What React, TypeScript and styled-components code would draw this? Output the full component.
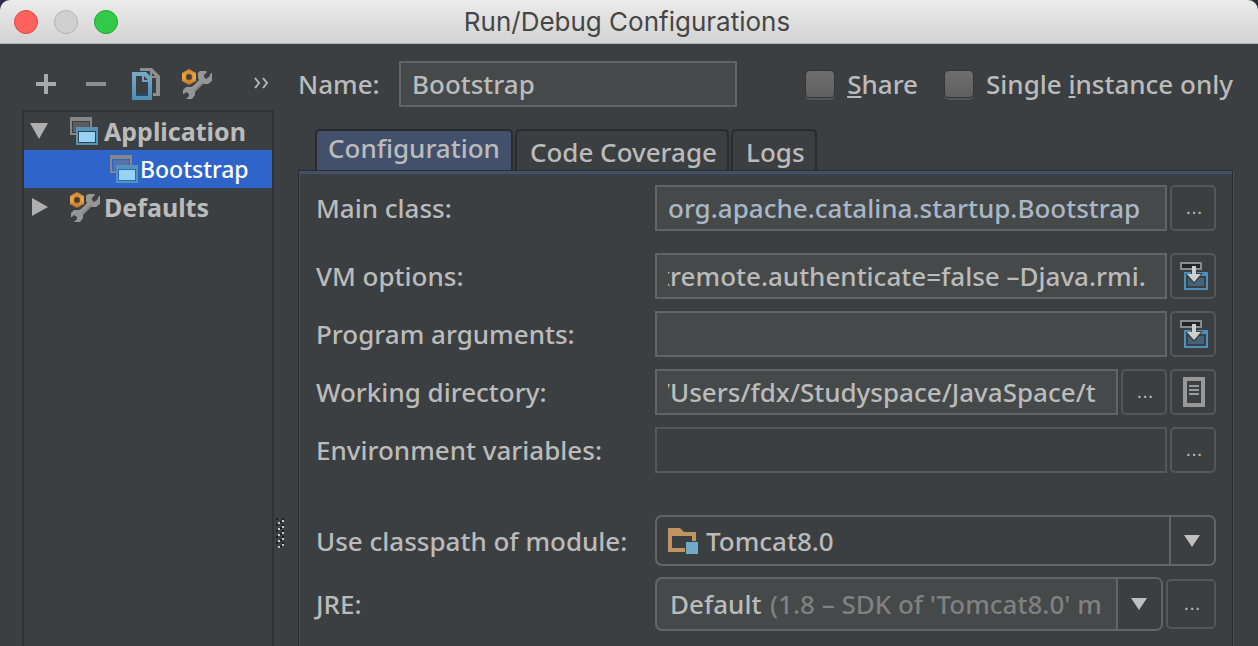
import React from 'react';
import styled, { createGlobalStyle, css } from 'styled-components';

const c = {
  bg: '#3c3f41',
  field: '#45494a',
  line: '#646464',
  softLine: '#555758',
  dark: '#292b2d',
  text: '#bbbbbb',
  accent: '#43506c',
};

const GlobalStyle = createGlobalStyle`
  *, *::before, *::after { box-sizing: border-box; }
  body {
    margin: 0;
    background: #2b2f45;
    color: ${c.text};
    font-family: "Noto Sans", "Open Sans", sans-serif;
    font-size: 26px;
    font-weight: 500;
    line-height: 36px;
  }
  button, input, select { font: inherit; color: inherit; margin: 0; }
`;

const Dialog = styled.div`
  display: flex;
  flex-direction: column;
  height: 100vh;
  overflow: hidden;
  background: ${c.bg};
  border-radius: 10px 10px 0 0;
`;

const TitleBar = styled.header`
  display: grid;
  grid-template-columns: 1fr auto 1fr;
  align-items: center;
  flex: none;
  height: 44px;
  padding: 0 18px 0 14px;
  background: linear-gradient(#ebebeb, #d3d3d3);
  border-bottom: 1px solid #b4b4b4;
`;

const Lights = styled.div`
  display: flex;
  gap: 16px;
`;

const Light = styled.button<{ $fill: string; $edge: string }>`
  width: 24px;
  height: 24px;
  padding: 0;
  border: 1px solid ${(p) => p.$edge};
  border-radius: 50%;
  background: ${(p) => p.$fill};
`;

const Title = styled.h1`
  margin: 0;
  font: 400 26px/36px Inter, Roboto, sans-serif;
  color: #464646;
`;

const Body = styled.div`
  display: flex;
  flex: 1;
  min-height: 0;
`;

const Sidebar = styled.aside`
  display: flex;
  flex-direction: column;
  flex: none;
  width: 274px;
  padding-left: 22px;
`;

const Toolbar = styled.div`
  display: flex;
  align-items: center;
  gap: 2px;
  height: 66px;
  padding-top: 14px;
`;

const ToolButton = styled.button<{ $end?: boolean }>`
  display: flex;
  align-items: center;
  justify-content: center;
  width: ${(p) => (p.$end ? 26 : 48)}px;
  height: 40px;
  padding: 0;
  margin-left: ${(p) => (p.$end ? 'auto' : 0)};
  border: 0;
  background: none;
`;

const Tree = styled.ul`
  flex: 1;
  margin: 0;
  padding: 0;
  list-style: none;
  border: 2px solid #323232;
  border-bottom: 0;
`;

const TreeRow = styled.li<{ $selected?: boolean; $child?: boolean }>`
  display: flex;
  align-items: center;
  gap: 6px;
  height: 38px;
  padding-left: 6px;
  font-weight: 700;
  font-size: 25px;
  ${(p) =>
    p.$child &&
    css`
      gap: 2px;
      padding-left: 86px;
      font-size: 23px;
      font-weight: 500;
    `}
  ${(p) =>
    p.$selected &&
    css`
      background: #2f65ca;
      color: #ffffff;
    `}
`;

const Twisty = styled.svg`
  flex: none;
  width: 20px;
  height: 20px;
  margin-right: 14px;
`;

const IconSlot = styled.span`
  display: flex;
  justify-content: center;
  flex: none;
  width: 28px;
  svg { flex: none; }
`;

const Splitter = styled.div`
  flex: none;
  width: 24px;
  padding: 474px 0 0 2px;
  line-height: 0;
`;

const Main = styled.main`
  display: flex;
  flex-direction: column;
  flex: 1;
  min-width: 0;
  padding-right: 25px;
`;

const NameRow = styled.div`
  display: flex;
  align-items: center;
  padding-top: 17px;
`;

const NameLabel = styled.label`
  width: 101px;
`;

const Field = styled.input<{ $shift?: number; $link?: boolean }>`
  flex: 1;
  min-width: 0;
  height: 46px;
  padding: 0 11px;
  border: 2px solid ${c.line};
  border-radius: 0;
  outline: 0;
  background: ${c.field};
  color: ${(p) => (p.$link ? '#a9b7c6' : c.text)};
  text-indent: ${(p) => -(p.$shift ?? 0)}px;
  &:disabled {
    background: none;
    border-color: ${c.softLine};
  }
`;

const NameField = styled(Field)`
  flex: 0 1 338px;
`;

const Checks = styled.div`
  display: flex;
  flex: none;
  gap: 26px;
  margin-left: auto;
`;

const CheckLabel = styled.label`
  display: flex;
  align-items: center;
  gap: 12px;
  white-space: pre;
`;

const CheckBox = styled.input`
  appearance: none;
  width: 30px;
  height: 28px;
  border: 1px solid #333537;
  border-radius: 5px;
  background: linear-gradient(#6e6e6e, #606060);
  box-shadow: 0 2px 0 #535657;
`;

const Key = styled.span`
  text-decoration: underline;
  text-decoration-thickness: 2px;
  text-underline-offset: 2px;
`;

const Tabs = styled.div`
  display: flex;
  gap: 2px;
  padding: 22px 0 0 17px;
`;

const Tab = styled.button<{ $active?: boolean }>`
  height: 41px;
  padding: ${(p) => (p.$active ? '0 11px 5px' : '3px 10px 0 13px')};
  border: 2px solid ${c.dark};
  border-bottom: 0;
  border-radius: 5px 5px 0 0;
  background: ${(p) => (p.$active ? c.accent : 'none')};
  line-height: 34px;
`;

const Panel = styled.form`
  flex: 1;
  border: solid ${c.dark};
  border-width: 1px 1px 0;
  box-shadow: 1px 1px 0 ${c.accent};
`;

const PanelInner = styled.div`
  display: flex;
  flex-direction: column;
  height: 100%;
  padding: 11px 16px 0 16px;
  border-top: 3px solid ${c.accent};
  border-left: 1px solid ${c.accent};
`;

const Row = styled.div<{ $gap?: number }>`
  display: grid;
  grid-template-columns: 339px minmax(0, 1fr);
  align-items: center;
  margin-top: ${(p) => p.$gap ?? 0}px;
`;

const Controls = styled.div`
  display: flex;
  align-items: center;
  gap: 3px;
`;

const SquareButton = styled.button<{ $size?: number }>`
  display: flex;
  align-items: center;
  justify-content: center;
  flex: none;
  width: ${(p) => p.$size ?? 46}px;
  height: ${(p) => p.$size ?? 46}px;
  padding: 0 0 0 2px;
  border: 2px solid ${c.softLine};
  border-radius: 5px;
  background: none;
  font: 18px/20px "DejaVu Sans", sans-serif;
`;

const Combo = styled.div<{ $filled?: boolean }>`
  display: flex;
  align-items: center;
  flex: 1;
  min-width: 0;
  height: ${(p) => (p.$filled ? 54 : 51)}px;
  padding-left: ${(p) => (p.$filled ? 13 : 11)}px;
  border: 2px solid ${c.line};
  border-radius: 7px;
  background: ${(p) => (p.$filled ? c.field : 'none')};
  overflow: hidden;
`;

const Select = styled.select<{ $grow?: boolean }>`
  appearance: none;
  flex: ${(p) => (p.$grow ? '1' : 'none')};
  padding: 0;
  border: 0;
  outline: 0;
  background: none;
`;

const Hint = styled.span`
  flex: 1;
  min-width: 0;
  margin: 0 0 0 8px;
  overflow: hidden;
  white-space: pre;
  color: #808080;
`;

const ComboArrow = styled.span`
  display: flex;
  align-items: center;
  align-self: stretch;
  flex: none;
  width: 45px;
  padding-left: 13px;
  border-left: 2px solid ${c.line};
  background: ${c.bg};
`;

const ModuleIconBox = styled.svg`
  flex: none;
  width: 30px;
  height: 26px;
  margin-right: 8px;
`;

const WindowsIcon = () => (
  <svg width="28" height="28" viewBox="0 0 28 28" aria-hidden="true">
    <path fill="#878787" d="M0 0H22V10H20V4H2V16H6V18H0Z" />
    <path fill="#878787" fillOpacity=".42" d="M3 5H19V10H6V15H3Z" />
    <path fill="#5394b8" fillRule="evenodd" d="M6 10H28V28H6ZM8 14V26H26V14Z" />
    <path fill="#98d3f5" d="M9 15H25V25H9Z" />
  </svg>
);

const WrenchIcon = () => (
  <svg width="31" height="31" viewBox="0 0 31 31" aria-hidden="true">
    <defs>
      <linearGradient id="nut" x1="0" y1="0" x2="0" y2="1">
        <stop offset="0" stopColor="#c9822e" />
        <stop offset=".5" stopColor="#edaa43" />
        <stop offset="1" stopColor="#b96d26" />
      </linearGradient>
    </defs>
    <path
      fill="#969696"
      d="M17 4L19 2H25L26 3L23 6V8L25 10L28 8L30 4H31V12L27 15H22L14 23V26L11 30L5 30L8 27L8 25L5 23L3 25H2V21L5 18H10L12 17L18 11L17 9Z"
    />
    <path stroke="#777777" fill="none" d="M13 22L23 13" />
    <path
      fill="url(#nut)"
      fillRule="evenodd"
      d="M8 0L15 4V12L8 16L1 12V4ZM8 5A3 3 0 1 0 8 11A3 3 0 1 0 8 5Z"
    />
    <circle cx="8" cy="8" r="3" fill="none" stroke="#87501f" />
  </svg>
);

const CopyIcon = () => (
  <svg width="28" height="32" viewBox="0 0 28 32" aria-hidden="true">
    <defs>
      <linearGradient id="sheet" x1="0" y1="0" x2="0" y2="1">
        <stop offset="0" stopColor="#79aac8" />
        <stop offset=".7" stopColor="#5c97bc" />
        <stop offset="1" stopColor="#4f8db3" />
      </linearGradient>
    </defs>
    <path
      fill="#8e8e8e"
      fillRule="evenodd"
      d="M8 0H20L28 8V28H21V25H24V10H18V3H8ZM20 5V8H23Z"
    />
    <path
      fill="url(#sheet)"
      fillRule="evenodd"
      d="M0 4H14L20 10V32H0ZM4 8V28H16V14H10V8ZM12 8V12H16Z"
    />
    <path fill="#1f4f70" d="M4 26H16V28H4Z" />
  </svg>
);

const ExpandIcon = () => (
  <svg width="28" height="28" viewBox="0 0 28 28" aria-hidden="true">
    <path fill="#232425" stroke="#8c8c8c" strokeWidth="2" d="M1 1H21V7H1Z" />
    <path fill="#4a92bd" fillRule="evenodd" d="M4 10H28V28H4ZM6 14V26H26V14Z" />
    <path fill="#43637a" d="M8 16H24V24H8Z" />
    <path fill="#3c3f41" d="M11 9H17V11H23L14 22L5 12H11Z" />
    <path fill="#cfcfcf" d="M12 4H16V12H21L14 20L7 12H12Z" />
  </svg>
);

const MacroIcon = () => (
  <svg width="22" height="30" viewBox="0 0 22 30" aria-hidden="true">
    <path
      fill="#999999"
      fillRule="evenodd"
      d="M0 0H22V30H0ZM4 4V26H18V4ZM6 8H16V10H6ZM6 12H16V14H6ZM6 16H16V18H6Z"
    />
  </svg>
);

const ModuleIcon = () => (
  <ModuleIconBox viewBox="0 0 30 26" aria-hidden="true">
    <path
      fill="#be9560"
      fillRule="evenodd"
      d="M0 0H12L16 4H28V13H24V8H4V20H17V24H0Z"
    />
    <path fill="#71a9ca" d="M18 14H30V26H18Z" />
  </ModuleIconBox>
);

const DownArrow = () => (
  <svg width="16" height="12" viewBox="0 0 16 12" aria-hidden="true">
    <path fill="#bfbfbf" d="M0 0H16L8 12Z" />
  </svg>
);

const Grip = () => {
  const dots = [0, 1, 2, 3, 4, 5, 6, 7, 8, 9];
  return (
    <svg width="8" height="32" viewBox="0 0 8 32" aria-hidden="true">
      {dots.map((i) => (
        <React.Fragment key={i}>
          <path fill="#1e1f20" d={i % 2 ? `M4 ${i * 3}h2v2h-2z` : `M0 ${i * 3}h2v2h-2zM6 ${i * 3}h2v2h-2z`} />
          <path fill="#c4c4c4" d={i % 2 ? `M2 ${i * 3 + 1}h2v2h-2z` : `M6 ${i * 3 + 2}h2v2h-2z`} />
        </React.Fragment>
      ))}
    </svg>
  );
};

const Dots = ({ label, size }: { label: string; size?: number }) => (
  <SquareButton type="button" aria-label={label} $size={size}>
    ...
  </SquareButton>
);

export default function App() {
  return (
    <>
      <GlobalStyle />
      <Dialog>
        <TitleBar>
          <Lights>
            <Light aria-label="Close" $fill="#ff615c" $edge="#e0443f" />
            <Light aria-label="Minimize" $fill="#d0d0d0" $edge="#b2b2b2" />
            <Light aria-label="Zoom" $fill="#34ca49" $edge="#1fa52f" />
          </Lights>
          <Title>Run/Debug Configurations</Title>
        </TitleBar>
        <Body>
          <Sidebar>
            <Toolbar>
              <ToolButton aria-label="Add">
                <svg width="20" height="20" viewBox="0 0 20 20">
                  <path fill="#a9a9a9" d="M8 0H12V8H20V12H12V20H8V12H0V8H8Z" />
                </svg>
              </ToolButton>
              <ToolButton aria-label="Remove">
                <svg width="20" height="20" viewBox="0 0 20 20">
                  <path fill="#8e8e8e" d="M0 8H20V12H0Z" />
                </svg>
              </ToolButton>
              <ToolButton aria-label="Copy">
                <CopyIcon />
              </ToolButton>
              <ToolButton aria-label="Edit defaults">
                <WrenchIcon />
              </ToolButton>
              <ToolButton aria-label="More" $end>
                <svg width="16" height="14" viewBox="0 0 16 14">
                  <path fill="none" stroke="#b4b4b4" strokeWidth="2" d="M2 1L6 6L2 11M10 1L14 6L10 11" />
                </svg>
              </ToolButton>
            </Toolbar>
            <Tree>
              <TreeRow>
                <Twisty viewBox="0 0 20 20">
                  <path fill="#afafaf" d="M0 2H18L9 18Z" />
                </Twisty>
                <IconSlot><WindowsIcon /></IconSlot>
                Application
              </TreeRow>
              <TreeRow $child $selected>
                <IconSlot><WindowsIcon /></IconSlot>
                Bootstrap
              </TreeRow>
              <TreeRow>
                <Twisty viewBox="0 0 20 20">
                  <path fill="#afafaf" d="M2 1L18 10L2 19Z" />
                </Twisty>
                <IconSlot><WrenchIcon /></IconSlot>
                Defaults
              </TreeRow>
            </Tree>
          </Sidebar>
          <Splitter>
            <Grip />
          </Splitter>
          <Main>
            <NameRow>
              <NameLabel htmlFor="name">Name:</NameLabel>
              <NameField id="name" defaultValue="Bootstrap" />
              <Checks>
                <CheckLabel>
                  <CheckBox type="checkbox" />
                  <span><Key>S</Key>hare</span>
                </CheckLabel>
                <CheckLabel>
                  <CheckBox type="checkbox" />
                  <span>Single <Key>i</Key>nstance only</span>
                </CheckLabel>
              </Checks>
            </NameRow>
            <Tabs>
              <Tab $active>Configuration</Tab>
              <Tab>Code Coverage</Tab>
              <Tab>Logs</Tab>
            </Tabs>
            <Panel>
              <PanelInner>
                <Row>
                  <label htmlFor="main-class">Main class:</label>
                  <Controls>
                    <Field id="main-class" $link defaultValue="org.apache.catalina.startup.Bootstrap" />
                    <Dots label="Browse main class" />
                  </Controls>
                </Row>
                <Row $gap={22}>
                  <label htmlFor="vm">VM options:</label>
                  <Controls>
                    <Field id="vm" $shift={12} defaultValue="xremote.authenticate=false –Djava.rmi." />
                    <SquareButton type="button" aria-label="Expand VM options"><ExpandIcon /></SquareButton>
                  </Controls>
                </Row>
                <Row $gap={12}>
                  <label htmlFor="args">Program arguments:</label>
                  <Controls>
                    <Field id="args" />
                    <SquareButton type="button" aria-label="Expand program arguments"><ExpandIcon /></SquareButton>
                  </Controls>
                </Row>
                <Row $gap={12}>
                  <label htmlFor="dir">Working directory:</label>
                  <Controls>
                    <Field id="dir" $shift={8} defaultValue="/Users/fdx/Studyspace/JavaSpace/t" />
                    <Dots label="Browse working directory" />
                    <SquareButton type="button" aria-label="Insert macro"><MacroIcon /></SquareButton>
                  </Controls>
                </Row>
                <Row $gap={12}>
                  <label htmlFor="env">Environment variables:</label>
                  <Controls>
                    <Field id="env" disabled />
                    <Dots label="Edit environment variables" />
                  </Controls>
                </Row>
                <Row $gap={42}>
                  <label htmlFor="module">Use classpath of module:</label>
                  <Combo>
                    <ModuleIcon />
                    <Select id="module" $grow>
                      <option>Tomcat8.0</option>
                    </Select>
                    <ComboArrow><DownArrow /></ComboArrow>
                  </Combo>
                </Row>
                <Row $gap={11}>
                  <label htmlFor="jre">JRE:</label>
                  <Controls>
                    <Combo $filled>
                      <Select id="jre">
                        <option>Default</option>
                      </Select>
                      <Hint>(1.8 – SDK of 'Tomcat8.0' m</Hint>
                      <ComboArrow><DownArrow /></ComboArrow>
                    </Combo>
                    <Dots label="Browse JRE" size={50} />
                  </Controls>
                </Row>
              </PanelInner>
            </Panel>
          </Main>
        </Body>
      </Dialog>
    </>
  );
}
